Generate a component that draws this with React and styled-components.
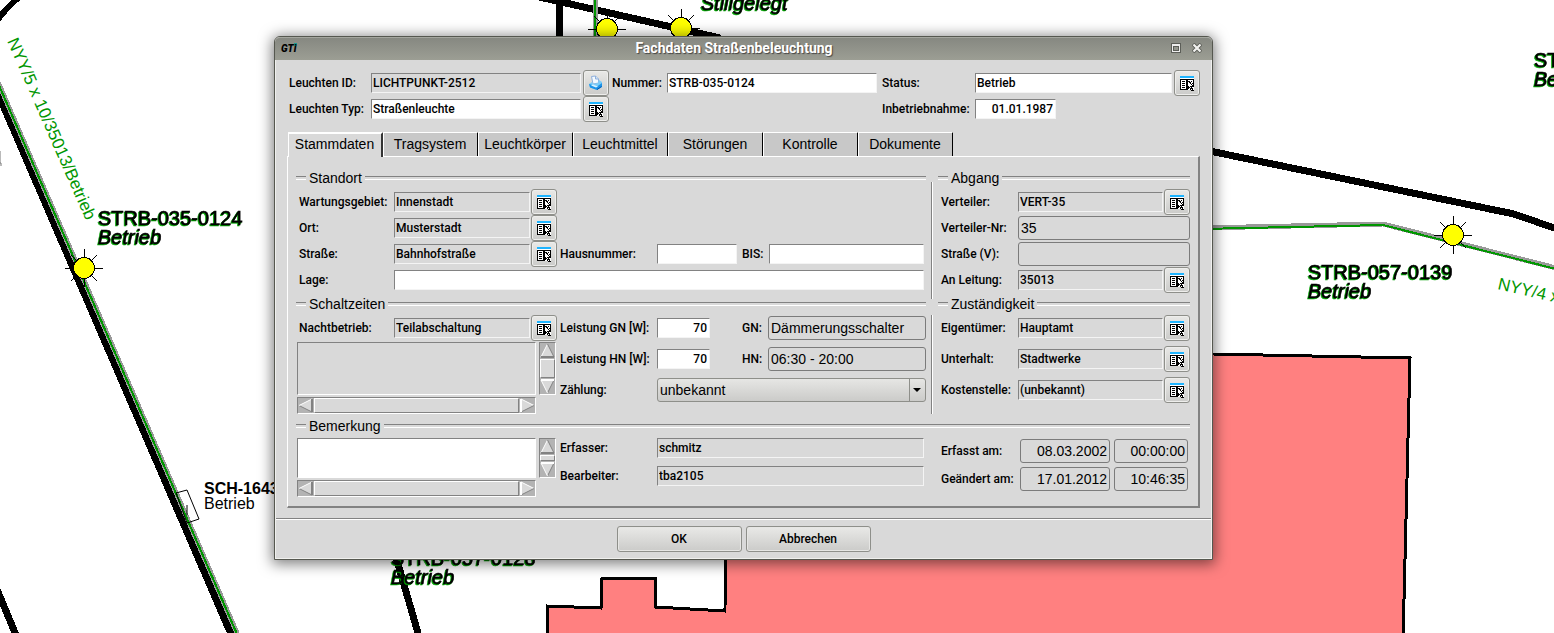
import React, { useId, useState } from 'react'
import styled, { createGlobalStyle, css } from 'styled-components'

const GlobalStyle = createGlobalStyle`
  * {
    box-sizing: border-box;
  }
  body {
    margin: 0;
    background: #fff;
    color: #000;
    font-family: Roboto, "Liberation Sans", sans-serif;
    font-size: 12px;
    font-weight: 500;
  }
  button, input, select, textarea {
    font: inherit;
    color: inherit;
    margin: 0;
  }
`

/* ---------- map ---------- */

const rays = [0, 45, 90, 135, 180, 225, 270, 315]

const Sun = ({ x, y }) => (
  <g transform={`translate(${x} ${y})`} stroke="#000" shapeRendering="crispEdges">
    {rays.map(a => (
      <line key={a} x1="11" x2="19" y1="0" y2="0" transform={`rotate(${a})`} />
    ))}
    <circle r="10.5" fill="#ff0" />
  </g>
)

const Cable = ({ points }) => (
  <g fill="none" shapeRendering="crispEdges">
    <polyline points={points} stroke="#999" strokeWidth="5" />
    <polyline points={points} stroke="#009600" strokeWidth="2" transform="translate(0 1)" />
  </g>
)

const LampLabel = ({ x, y, id, status = 'Betrieb' }) => (
  <LampText>
    <text x={x} y={y}>{id}</text>
    <text x={x} y={y + 19} fontStyle="italic">{status}</text>
  </LampText>
)

const Map = () => (
  <MapSvg aria-label="Lageplan">
    <polygon
      points="726,350 1213,354 1410,358 1403,640 547,640 547,606 601,608 602,578 655,578 655,607 725,611"
      fill="#ff8080"
      stroke="#000"
      strokeWidth="3"
      shapeRendering="crispEdges"
    />
    <g fill="none" stroke="#000" strokeWidth="7" shapeRendering="crispEdges">
      <path d="M-4 89L234 641" />
      <path d="M-4 22Q6 8 18 -2" strokeWidth="6" />
      <path d="M-4 587L18 640" />
      <path d="M559 0V40M535 -4L720 38" />
      <path d="M1200 149L1514 214L1560 230" />
      <path d="M394 550L420 640" />
    </g>
    <Cable points="-2,82 240,640" />
    <Cable points="595,-4 595,40" />
    <Cable points="1200,228 1383,224 1560,269" />
    <polygon points="176,493 187,490 199,519 187,523" fill="none" stroke="#000" />
    <path d="M187 505V515" stroke="#000" />
    <path d="M0 151V163H1V166" stroke="#777" fill="none" />
    <Sun x={84} y={268} />
    <Sun x={607} y={29} />
    <Sun x={681} y={28} />
    <Sun x={1453} y={235} />
    <CableText transform="translate(7 41) rotate(66.3)">NYY/5 x 10/35013/Betrieb</CableText>
    <CableText transform="translate(1497 289) rotate(13)">NYY/4 x</CableText>
    <LampLabel x={98} y={225} id="STRB-035-0124" />
    <LampLabel x={1308} y={279} id="STRB-057-0139" />
    <LampLabel x={1534} y={67} id="STRB" />
    <LampLabel x={391} y={565} id="STRB-057-0128" />
    <LampText>
      <text x="701" y="10" fontStyle="italic">Stillgelegt</text>
    </LampText>
    <ManholeText>
      <text x="204" y="494" fontWeight="700">SCH-1643</text>
      <text x="204" y="509">Betrieb</text>
    </ManholeText>
  </MapSvg>
)

/* ---------- icons ---------- */

const ListIcon = () => (
  <svg width="14" height="15" viewBox="0 0 14 15" shapeRendering="crispEdges" aria-hidden="true">
    <rect y="2" width="14" height="12" fill="#fff" />
    <rect width="14" height="2" fill="#1eb4ff" />
    <path
      d="M0 3h14v1H0zM0 3h1v11H0zM0 13h7v1H0zM6 4h1v9H6zM13 3h1v7h-1zM2 5h3v1H2zM2 7h3v1H2zM2 9h3v1H2zM2 11h3v1H2zM9 5h1v1H9zM11 5h1v1h-1zM10 6h1v1h-1zM12 7h1v1h-1z"
      fill="#000"
    />
    <path
      d="M7 4h1v1h1v1h1v1h1v1h1v1h1v1h1v1h-2v1h1v2h1v1h-3v-1h-1v-2H9v1H8v1H7z"
      fill="#000"
    />
    <path d="M8 6h1v1h1v1h1v1h1v1h-2v2h1v2h1v-1h-1v-2H9v-1H8z" fill="#fff" />
  </svg>
)

const PrintIcon = () => (
  <svg width="16" height="16" viewBox="0 0 16 16" aria-hidden="true">
    <path d="M3.500 1.500L7.500 1L10.500 4V8L5 9Z" fill="#f4faff" stroke="#8fb0dc" />
    <path d="M7.500 1V4H10.500" fill="#cfe2f6" stroke="#8fb0dc" />
    <path d="M1 9L4 7L5 9L10 8L11 5L14 7V12L9 15L2 12.500Z" fill="#7accf8" />
    <path d="M1 9L9 11.500L14 8V12L9 15L2 12.500Z" fill="#1c94e8" />
    <path d="M3 10.500L8 12.500L10 11.500L5 9.500Z" fill="#d8f2ff" />
    <path d="M9 14.500L13.500 11.500" stroke="#0b57ae" />
  </svg>
)

const MaximizeIcon = () => (
  <svg width="10" height="10" viewBox="0 0 10 10" shapeRendering="crispEdges" aria-hidden="true">
    <path d="M0 0h10v10H0z" fill="#5c5e58" />
    <path d="M1 1h8v8H1z" fill="#eee" />
    <path d="M2 3h6v5H2z" fill="#5c5e58" />
    <path d="M3 4h4v3H3z" fill="#94968e" />
  </svg>
)

const CloseIcon = () => (
  <svg width="10" height="10" viewBox="0 0 10 10" aria-hidden="true">
    <path d="M1 1L9 9M9 1L1 9" stroke="#5c5e58" strokeWidth="4" />
    <path d="M1.500 1.500L8.500 8.500M8.500 1.500L1.500 8.500" stroke="#f2f2f0" strokeWidth="2.200" />
  </svg>
)

// edge colours of the bevel before turning: left, right, base
const arrows = {
  up: { turn: 0, edges: ['#fff', '#828282', '#828282'] },
  right: { turn: 90, edges: ['#fff', '#828282', '#fff'] },
  down: { turn: 180, edges: ['#828282', '#fff', '#fff'] },
  left: { turn: 270, edges: ['#828282', '#fff', '#828282'] },
}

const ArrowIcon = ({ dir }) => {
  const { turn, edges } = arrows[dir]
  return (
    <svg width="15" height="15" viewBox="0 0 15 15" aria-hidden="true">
      <g transform={`rotate(${turn} 7.500 7.500)`}>
        <path d="M7.500 1L14 14H1Z" fill="#d9d9d9" />
        <path d="M1 14L7.500 1" stroke={edges[0]} />
        <path d="M7.500 1L14 14" stroke={edges[1]} />
        <path d="M1 14H14" stroke={edges[2]} strokeWidth="2" />
      </g>
    </svg>
  )
}

/* ---------- form parts ---------- */

const Scroll = ({ vertical }) => (
  <ScrollTrack $vertical={vertical}>
    <ScrollArrow type="button" aria-label={vertical ? 'Nach oben' : 'Nach links'}>
      <ArrowIcon dir={vertical ? 'up' : 'left'} />
    </ScrollArrow>
    <ScrollThumb />
    <ScrollArrow type="button" aria-label={vertical ? 'Nach unten' : 'Nach rechts'}>
      <ArrowIcon dir={vertical ? 'down' : 'right'} />
    </ScrollArrow>
  </ScrollTrack>
)

const Memo = ({ label, height, editable }) => (
  <MemoGrid>
    <MemoText aria-label={label} $height={height} $editable={editable} readOnly={!editable} />
    <Scroll vertical />
    <Scroll />
  </MemoGrid>
)

const Entry = ({ label, value = '', kind = 'readonly', align, picker, gap = 1, icon }) => {
  const id = useId()
  const [text, setText] = useState(value)
  const Control = kind === 'display' ? DisplayInput : Input
  return (
    <>
      <Label htmlFor={id}>{label}</Label>
      <Control
        id={id}
        value={text}
        readOnly={kind !== 'edit'}
        $editable={kind === 'edit'}
        $align={align}
        onChange={e => setText(e.target.value)}
      />
      {picker && (
        <PickButton type="button" aria-label={`${label} auswählen`} $gap={gap}>
          {icon || <ListIcon />}
        </PickButton>
      )}
    </>
  )
}

const Group = ({ title, children }) => (
  <section>
    <GroupTitle>{title}</GroupTitle>
    {children}
  </section>
)

const tabs = ['Stammdaten', 'Tragsystem', 'Leuchtkörper', 'Leuchtmittel', 'Störungen', 'Kontrolle', 'Dokumente']

const App = () => {
  const [tab, setTab] = useState(0)
  return (
    <Screen>
      <GlobalStyle />
      <Map />
      <Dialog role="dialog" aria-label="Fachdaten Straßenbeleuchtung">
        <TitleBar>
          <Logo>GTi</Logo>
          <Title>Fachdaten Straßenbeleuchtung</Title>
          <WindowButton type="button" aria-label="Maximieren"><MaximizeIcon /></WindowButton>
          <WindowButton type="button" aria-label="Schließen"><CloseIcon /></WindowButton>
        </TitleBar>
        <Head>
          <Row $columns="82px minmax(0, 1fr) 31px">
            <Entry label="Leuchten ID:" value="LICHTPUNKT-2512" picker gap={2} icon={<PrintIcon />} />
            <Entry label="Leuchten Typ:" value="Straßenleuchte" kind="edit" picker gap={2} />
          </Row>
          <Row $columns="55px minmax(0, 1fr)">
            <Entry label="Nummer:" value="STRB-035-0124" kind="edit" />
          </Row>
          <Row $columns="93px 81px minmax(0, 1fr) 28px">
            <WideEntry>
              <Entry label="Status:" value="Betrieb" kind="edit" picker gap={2} />
            </WideEntry>
            <Entry label="Inbetriebnahme:" value="01.01.1987" kind="edit" align="right" />
          </Row>
        </Head>
        <TabList role="tablist">
          {tabs.map((name, i) => (
            <Tab key={name} type="button" role="tab" aria-selected={i === tab} $active={i === tab} onClick={() => setTab(i)}>
              {name}
            </Tab>
          ))}
        </TabList>
        <Panel role="tabpanel">
          <Columns>
            <Group title="Standort">
              <GroupBody>
                <Row $columns="95px 136px 30px">
                  <Entry label="Wartungsgebiet:" value="Innenstadt" picker />
                  <Entry label="Ort:" value="Musterstadt" picker />
                </Row>
                <Row $columns="95px 136px 30px 97px 80px 32px minmax(0, 1fr)">
                  <Entry label="Straße:" value="Bahnhofstraße" picker />
                  <Entry label="Hausnummer:" kind="edit" />
                  <IndentEntry>
                    <Entry label="BIS:" kind="edit" />
                  </IndentEntry>
                </Row>
                <Row $columns="95px minmax(0, 1fr)">
                  <Entry label="Lage:" kind="edit" />
                </Row>
              </GroupBody>
            </Group>
            <Divider $top={15} $bottom={-6} />
            <Group title="Abgang">
              <SideBody>
                <Row $columns="77px minmax(0, 1fr) 27px">
                  <Entry label="Verteiler:" value="VERT-35" picker />
                </Row>
                <Row $columns="77px minmax(0, 1fr)">
                  <Entry label="Verteiler-Nr:" value="35" kind="display" />
                  <Entry label="Straße (V):" kind="display" />
                </Row>
                <Row $columns="77px minmax(0, 1fr) 27px">
                  <Entry label="An Leitung:" value="35013" picker />
                </Row>
              </SideBody>
            </Group>
          </Columns>
          <Columns>
            <Group title="Schaltzeiten">
              <Switching>
                <div>
                  <NightRow>
                    <Row $columns="95px 136px 30px">
                      <Entry label="Nachtbetrieb:" value="Teilabschaltung" picker />
                    </Row>
                  </NightRow>
                  <Memo label="Schaltzeiten" height={53} />
                </div>
                <Row $columns="97px 53px 58px minmax(0, 1fr)" $gap={5}>
                  <Entry label="Leistung GN [W]:" value="70" kind="edit" align="right" />
                  <IndentEntry $wide>
                    <Entry label="GN:" value="Dämmerungsschalter" kind="display" />
                  </IndentEntry>
                  <Entry label="Leistung HN [W]:" value="70" kind="edit" align="right" />
                  <IndentEntry $wide>
                    <Entry label="HN:" value="06:30 - 20:00" kind="display" />
                  </IndentEntry>
                  <Label htmlFor="zaehlung">Zählung:</Label>
                  <SelectBox>
                    <Select id="zaehlung" defaultValue="unbekannt">
                      <option>unbekannt</option>
                    </Select>
                  </SelectBox>
                </Row>
              </Switching>
            </Group>
            <Divider $top={22} $bottom={1} />
            <Group title="Zuständigkeit">
              <SideBody>
                <Row $columns="77px minmax(0, 1fr) 27px" $gap={5}>
                  <Entry label="Eigentümer:" value="Hauptamt" picker />
                  <Entry label="Unterhalt:" value="Stadtwerke" picker />
                  <Entry label="Kostenstelle:" value="(unbekannt)" picker />
                </Row>
              </SideBody>
            </Group>
          </Columns>
          <Group title="Bemerkung">
            <Remarks>
              <Memo label="Bemerkung" height={40} editable />
              <Row $columns="97px minmax(0, 1fr)" $height={22} $gap={6}>
                <Entry label="Erfasser:" value="schmitz" />
                <Entry label="Bearbeiter:" value="tba2105" />
              </Row>
              <StampRows>
                <Row $columns="75px minmax(0, 1fr) 74px" $gap={2} $columnGap={4}>
                  <Entry label="Erfasst am:" value="08.03.2002" kind="display" align="right" />
                  <DisplayInput aria-label="Erfasst um" defaultValue="00:00:00" readOnly $align="right" />
                  <Entry label="Geändert am:" value="17.01.2012" kind="display" align="right" />
                  <DisplayInput aria-label="Geändert um" defaultValue="10:46:35" readOnly $align="right" />
                </Row>
              </StampRows>
            </Remarks>
          </Group>
        </Panel>
        <Footer>
          <ActionButton type="button">OK</ActionButton>
          <ActionButton type="button">Abbrechen</ActionButton>
        </Footer>
      </Dialog>
    </Screen>
  )
}

/* ---------- styles ---------- */

const Screen = styled.div`
  display: flow-root;
  position: relative;
  min-height: 100vh;
  overflow: hidden;
`
const MapSvg = styled.svg`
  position: absolute;
  inset: 0;
  width: 100%;
  height: 100%;
  font-family: "Liberation Sans", Arial, sans-serif;
  font-weight: 400;
`
const LampText = styled.g`
  font-size: 20px;
  stroke: #000;
  stroke-width: 0.6px;
  filter: drop-shadow(-1px 1px 0 #00a000);
`
const ManholeText = styled.g`
  font-size: 16px;
`
const CableText = styled.text`
  font-size: 17px;
  fill: #009600;
`
const Dialog = styled.div`
  position: relative;
  min-width: 860px;
  margin: 36px 341px 36px 274px;
  background: #d9d9d9;
  border: 1px solid #55574f;
  border-radius: 6px 6px 0 0;
  box-shadow: inset 1px 0 #f0f0ee, inset -1px -1px #f0f0ee, 0 2px 14px 2px rgba(0, 0, 0, 0.5);
`
const TitleBar = styled.header`
  display: flex;
  align-items: center;
  gap: 11px;
  height: 23px;
  padding: 0 10px 2px 6px;
  border-radius: 5px 5px 0 0;
  border-top: 1px solid #a4a69e;
  background: linear-gradient(#868881, #9c9e94);
`
const Logo = styled.span`
  width: 16px;
  font-size: 10px;
  font-weight: 900;
  font-style: italic;
  background: linear-gradient(#1b9a90, #1b9a90) 13px 0 / 3px 3px no-repeat;
`
const Title = styled.h1`
  flex: 1;
  margin: 0;
  text-align: center;
  font-size: 14px;
  font-weight: 700;
  line-height: 18px;
  color: #fff;
  text-shadow: 1px 1px 1px #444;
`
const WindowButton = styled.button`
  display: flex;
  padding: 0;
  border: 0;
  background: none;
`
const Head = styled.div`
  display: grid;
  grid-template-columns: 318fr 265fr 318fr;
  gap: 5px;
  align-items: start;
  padding: 10px 12px 0 14px;
  > :first-child {
    margin-right: -5px;
  }
`
const Row = styled.div`
  display: grid;
  grid-template-columns: ${({ $columns }) => $columns};
  grid-auto-rows: ${({ $height = 26 }) => $height}px;
  align-items: center;
  row-gap: ${({ $gap = 0 }) => $gap}px;
  column-gap: ${({ $columnGap = 0 }) => $columnGap}px;
`
const Label = styled.label`
  white-space: nowrap;
`
const align = css`
  text-align: ${({ $align }) => $align || 'left'};
`
const Input = styled.input`
  width: 100%;
  min-width: 0;
  height: 20px;
  padding: 0 2px 0 1px;
  border: 1px solid;
  border-color: #828282 #f4f4f4 #f4f4f4 #828282;
  border-radius: 0;
  background: ${({ $editable }) => ($editable ? '#fff' : '#d9d9d9')};
  ${align}
`
const DisplayInput = styled.input`
  width: 100%;
  min-width: 0;
  height: 24px;
  padding: 0 2px;
  border: 1px solid #7b7b7b;
  border-radius: 3px;
  background: #d9d9d9;
  font-family: "Liberation Sans", Arial, sans-serif;
  font-size: 14px;
  font-weight: 400;
  ${align}
`
const WideEntry = styled.div`
  display: contents;
  > input {
    grid-column: span 2;
  }
`
const IndentEntry = styled.div`
  display: contents;
  > label {
    padding-left: ${({ $wide }) => ($wide ? 32 : 5)}px;
  }
`
const PickButton = styled.button`
  display: flex;
  align-items: center;
  justify-content: center;
  width: 26px;
  height: 26px;
  margin-left: ${({ $gap }) => $gap}px;
  padding: 0;
  border: 1px solid #8e8f8a;
  border-radius: 3px;
  background: linear-gradient(#e9e9e7, #cbcbc9);
  box-shadow: inset 0 0 0 1px #eeeeec;
`
const TabList = styled.div`
  display: flex;
  margin: 10px 13px 0;
`
const Tab = styled.button`
  width: 95px;
  height: 24px;
  padding: 0 1px 2px 0;
  border: solid;
  border-width: 1px 1px 0 1px;
  border-color: #fff #000 #fff #fff;
  border-radius: 1px 1px 0 0;
  background: ${({ $active }) => ($active ? '#d9d9d9' : '#c8c8c8')};
  font-family: "Liberation Sans", Arial, sans-serif;
  font-size: 14px;
  font-weight: 400;
  ${({ $active }) => $active && css`
    position: relative;
    z-index: 1;
    margin-bottom: -1px;
    height: 25px;
    padding-bottom: 4px;
    border-width: 2px 2px 0 1px;
    border-color: #fff #333 #fff #fff;
  `}
`
const Panel = styled.div`
  margin: 0 12px;
  padding: 10px 8px 9px;
  border: solid;
  border-width: 1px 2px 2px 1px;
  border-color: #fff #828282 #828282 #fff;
`
const Columns = styled.div`
  display: grid;
  grid-template-columns: minmax(0, 1fr) 2px 252px;
  column-gap: 5px;
`
const Divider = styled.div`
  border-left: 1px solid #828282;
  border-right: 1px solid #fff;
  margin: ${({ $top }) => $top}px 0 ${({ $bottom }) => $bottom}px;
`
const GroupTitle = styled.h2`
  display: flex;
  align-items: center;
  gap: 3px;
  height: 22px;
  margin: 0;
  font-family: "Liberation Sans", Arial, sans-serif;
  font-size: 14px;
  font-weight: 400;
  &::before, &::after {
    content: '';
    width: 10px;
    height: 2px;
    border-top: 1px solid #828282;
    border-bottom: 1px solid #fff;
  }
  &::after {
    flex: 1;
  }
`
const GroupBody = styled.div`
  padding: 0 2px 0 3px;
`
const SideBody = styled.div`
  padding-left: 3px;
`
const Switching = styled.div`
  display: grid;
  grid-template-columns: 264px minmax(0, 1fr);
  align-items: start;
  height: 100px;
`
const NightRow = styled.div`
  padding-left: 3px;
`
const SelectBox = styled.div`
  grid-column: 2 / -1;
  position: relative;
  &::before {
    content: '';
    position: absolute;
    right: 16px;
    top: 1px;
    bottom: 1px;
    border-left: 1px solid #8e8f8a;
  }
  &::after {
    content: '';
    position: absolute;
    right: 5px;
    top: 10px;
    border: 4px solid transparent;
    border-top-color: #000;
    border-bottom: 0;
    pointer-events: none;
  }
`
const Select = styled.select`
  appearance: none;
  display: block;
  width: 100%;
  height: 24px;
  padding: 0 20px 0 2px;
  border: 1px solid #8e8f8a;
  border-radius: 3px;
  background: linear-gradient(#e6e6e4, #cbcbc9);
  font-family: "Liberation Sans", Arial, sans-serif;
  font-size: 14px;
  font-weight: 400;
`
const MemoGrid = styled.div`
  display: grid;
  grid-template-columns: 239px 17px;
  gap: 2px 3px;
  padding: 1px 0 0 1px;
`
const MemoText = styled.textarea`
  display: block;
  width: 100%;
  height: ${({ $height }) => $height}px;
  padding: 1px;
  resize: none;
  overflow: hidden;
  border: 1px solid;
  border-color: #828282 #fff #fff #828282;
  border-radius: 0;
  background: ${({ $editable }) => ($editable ? '#fff' : '#d9d9d9')};
`
const ScrollTrack = styled.div`
  display: flex;
  flex-direction: ${({ $vertical }) => ($vertical ? 'column' : 'row')};
  min-height: 17px;
  gap: 1px;
  border: 1px solid;
  border-color: #828282 #fff #fff #828282;
  background: #b3b3b3;
`
const ScrollArrow = styled.button`
  display: flex;
  padding: 0;
  border: 0;
  background: none;
`
const ScrollThumb = styled.div`
  flex: 1;
  border: 1px solid;
  border-color: #fff #828282 #828282 #fff;
  background: #d9d9d9;
`
const Remarks = styled.div`
  display: grid;
  grid-template-columns: 264px minmax(0, 1fr) 249px;
  align-items: start;
  > :nth-child(2) {
    margin-right: 17px;
  }
`
const StampRows = styled.div`
  padding: 1px 2px 0 0;
`
const Footer = styled.footer`
  display: flex;
  justify-content: center;
  gap: 4px;
  margin: 10px 1px 0;
  padding: 7px 0;
  border-top: 1px solid #828282;
  box-shadow: inset 0 1px #fff;
`
const ActionButton = styled.button`
  width: 125px;
  height: 26px;
  border: 1px solid #8e8f8a;
  border-radius: 3px;
  background: linear-gradient(#e9e9e7, #cbcbc9);
  box-shadow: inset 0 0 0 1px #e6e6e4;
`

export default App
